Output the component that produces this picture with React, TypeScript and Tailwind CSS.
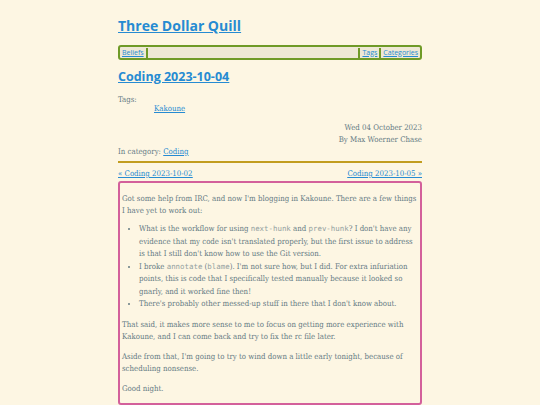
import React from 'react';

const serif = "font-['DejaVu_Serif_Condensed','DejaVu_Serif',serif]";
const sans = "font-['Open_Sans',sans-serif]";
const mono = "font-['DejaVu_Sans_Mono',monospace] text-[#93a1a1] text-[0.95em]";

export default function App() {
  return (
    <div className="min-h-[405px] bg-[#fdf6e3] text-[#657b83]">
      <div className={`mx-auto w-[304px] pt-[14px] ${serif}`}>
        {/* Site title */}
        <h1 className={`${sans} text-[14px] font-bold leading-[24px] text-[#268bd2] underline`}>
          <a href="#">Three Dollar Quill</a>
        </h1>

        {/* Nav bar */}
        <nav className={`${sans} mt-[7px] flex h-[15px] items-center rounded-[3px] border-2 border-[#6f9a27] bg-[#eee8d5] px-[2px] text-[7px] text-[#268bd2]`}>
          <a href="#" className="border-r-2 border-[#6f9a27] pr-[2px] leading-[10px] underline">Beliefs</a>
          <div className="flex-1" />
          <a href="#" className="border-l-2 border-[#6f9a27] px-[2px] leading-[10px] underline">Tags</a>
          <a href="#" className="border-l-2 border-[#6f9a27] pl-[2px] leading-[10px] underline">Categories</a>
        </nav>

        {/* Post title */}
        <h2 className={`${sans} mt-[8px] text-[12.5px] font-bold leading-[18px] text-[#268bd2] underline`}>
          <a href="#">Coding 2023-10-04</a>
        </h2>

        <div className="mt-[8px] text-[7.8px] leading-[12px]">
          <div>Tags:</div>
          <ul className="-mt-[3px] pl-[36px]">
            <li><a href="#" className="text-[#268bd2] underline">Kakoune</a></li>
          </ul>
          <div className="mt-[7px] text-right">Wed 04 October 2023</div>
          <div className="text-right">By Max Woerner Chase</div>
          <div>
            In category: <a href="#" className="text-[#268bd2] underline">Coding</a>
          </div>
        </div>

        <hr className="mt-[3px] border-t-2 border-[#c29d1f]" />

        <div className="mt-[5px] flex justify-between text-[7.8px] leading-[12px] text-[#268bd2] underline">
          <a href="#">« Coding 2023-10-02</a>
          <a href="#">Coding 2023-10-05 »</a>
        </div>

        {/* Post body */}
        <article className="mt-[1px] rounded-[3px] border-2 border-[#d3609b] px-[2px] pt-[10px] pb-[8px] text-[7.8px] leading-[12px]">
          <p>
            Got some help from IRC, and now I'm blogging in Kakoune. There are a few things I have yet to work out:
          </p>
          <ul className="mt-[6px] list-disc pl-[17px]">
            <li className="leading-[12.5px]">
              What is the workflow for using <code className={mono}>next-hunk</code> and{' '}
              <code className={mono}>prev-hunk</code>? I don't have any evidence that my code isn't translated properly, but
              the first issue to address is that I still don't know how to use the Git version.
            </li>
            <li className="leading-[12.5px]">
              I broke <code className={mono}>annotate</code> (<code className={mono}>blame</code>). I'm not sure how, but I
              did. For extra infuriation points, this is code that I specifically tested manually because it looked so
              gnarly, and it worked fine then!
            </li>
            <li className="leading-[12.5px]">There's probably other messed-up stuff in there that I don't know about.</li>
          </ul>
          <p className="mt-[8px]">
            That said, it makes more sense to me to focus on getting more experience with Kakoune, and I can come back and
            try to fix the rc file later.
          </p>
          <p className="mt-[8px]">
            Aside from that, I'm going to try to wind down a little early tonight, because of scheduling nonsense.
          </p>
          <p className="mt-[8px]">Good night.</p>
        </article>
      </div>
    </div>
  );
}
